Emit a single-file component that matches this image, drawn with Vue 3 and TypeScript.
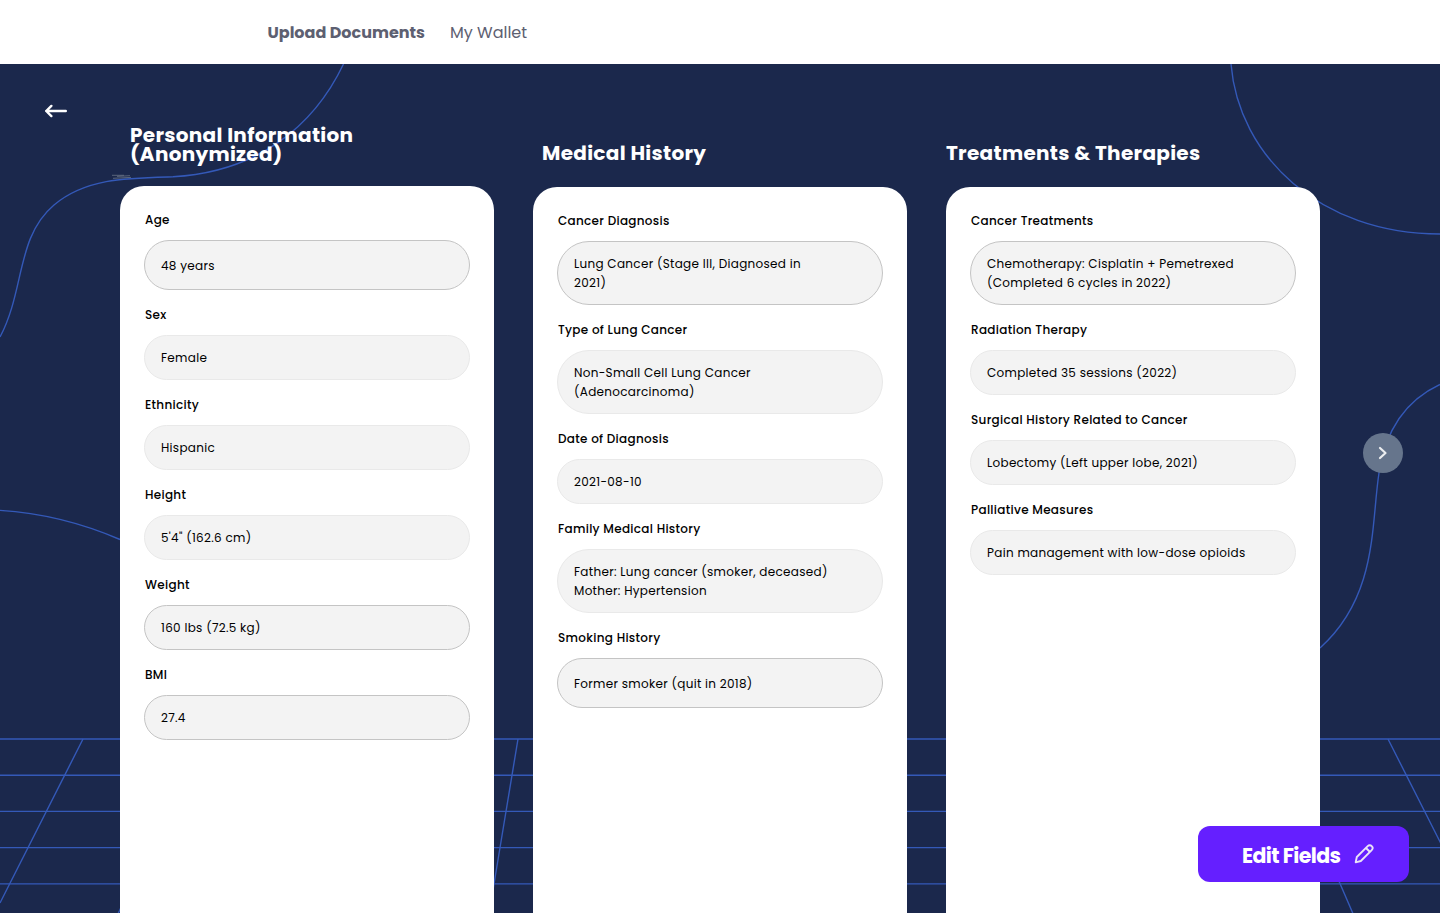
<script setup lang="ts">
interface Field {
  label: string
  lines: string[]
  tall?: boolean
  outlined?: boolean
}
interface Section {
  title: string[]
  fields: Field[]
}

const sections: Section[] = [
  {
    title: ['Personal Information', '(Anonymized)'],
    fields: [
      { label: 'Age', lines: ['48 years'], tall: true, outlined: true },
      { label: 'Sex', lines: ['Female'] },
      { label: 'Ethnicity', lines: ['Hispanic'] },
      { label: 'Height', lines: ['5\'4" (162.6 cm)'] },
      { label: 'Weight', lines: ['160 lbs (72.5 kg)'], outlined: true },
      { label: 'BMI', lines: ['27.4'], outlined: true },
    ],
  },
  {
    title: ['Medical History'],
    fields: [
      { label: 'Cancer Diagnosis', lines: ['Lung Cancer (Stage III, Diagnosed in', '2021)'], outlined: true },
      { label: 'Type of Lung Cancer', lines: ['Non-Small Cell Lung Cancer', '(Adenocarcinoma)'] },
      { label: 'Date of Diagnosis', lines: ['2021-08-10'] },
      { label: 'Family Medical History', lines: ['Father: Lung cancer (smoker, deceased)', 'Mother: Hypertension'] },
      { label: 'Smoking History', lines: ['Former smoker (quit in 2018)'], tall: true, outlined: true },
    ],
  },
  {
    title: ['Treatments & Therapies'],
    fields: [
      { label: 'Cancer Treatments', lines: ['Chemotherapy: Cisplatin + Pemetrexed', '(Completed 6 cycles in 2022)'], outlined: true },
      { label: 'Radiation Therapy', lines: ['Completed 35 sessions (2022)'] },
      { label: 'Surgical History Related to Cancer', lines: ['Lobectomy (Left upper lobe, 2021)'] },
      { label: 'Palliative Measures', lines: ['Pain management with low-dose opioids'] },
    ],
  },
]

const gridRows = [675, 711.2, 747.4, 783.6, 819.9]
</script>

<template>
  <div class="page">
    <header class="topbar">
      <nav class="nav">
        <a class="nav-link active">Upload Documents</a>
        <a class="nav-link">My Wallet</a>
      </nav>
    </header>

    <main class="stage">
      <svg class="backdrop" viewBox="0 0 1440 849" aria-hidden="true">
        <g fill="none" stroke="#3459b8" stroke-width="1.4">
          <path d="M343.5 0C314 62 258 108 173 112.8C128 114 86 114 54 141C16 173 25 226 0 273" />
          <path d="M1231 0C1238.5 92 1320 170 1440 170" />
          <path d="M1440 320.5C1398 340 1384 376 1379 409C1371 460 1378 532 1320 584" />
          <path d="M0 446.4C42 449 84 460 120 475.5" />
          <path v-for="y in gridRows" :key="y" :d="`M0 ${y}H1440`" />
          <path d="M83 675L0 839M158 765L117 852M518 675L493 826M1388 675L1476 849M1310 750L1354 852" />
        </g>
        <g fill="none" stroke="#76808f" stroke-width="0.7">
          <path d="M112 111.3H124M117 112.4L130 111.7M113 114.3L131 113.4" />
        </g>
      </svg>

      <button class="back" aria-label="Back">
        <svg width="24" height="14" viewBox="0 0 24 14" fill="none" stroke="#fff" stroke-width="2.4" stroke-linecap="round" stroke-linejoin="round">
          <path d="M21.8 7H2.2M7.4 1.9L2.2 7L7.4 12.1" />
        </svg>
      </button>

      <div class="columns">
        <section v-for="section in sections" :key="section.title[0]" class="column">
          <h2 class="title">{{ section.title.join('\n') }}</h2>
          <div class="card">
            <div v-for="field in section.fields" :key="field.label" class="field">
              <div class="label">{{ field.label }}</div>
              <div class="value" :class="{ tall: field.tall, outlined: field.outlined, double: field.lines.length > 1 }">
                <span v-for="line in field.lines" :key="line">{{ line }}</span>
              </div>
            </div>
          </div>
        </section>
      </div>

      <button class="next" aria-label="Next">
        <svg width="10" height="14" viewBox="0 0 10 14" fill="none" stroke="#eceef0" stroke-width="2.2" stroke-linecap="round" stroke-linejoin="round">
          <path d="M2 2L7.5 7L2 12" />
        </svg>
      </button>

      <button class="edit">
        <span>Edit Fields</span>
        <svg width="20" height="20" viewBox="0 0 20 20" fill="none" stroke="#e9e2f8" stroke-width="1.9" stroke-linejoin="round">
          <path d="M1.7 18.3L2.8 13L13.7 2.1A2.7 2.7 0 0 1 17.7 6.1L6.8 17Z" />
          <path d="M12 4L16 8" />
        </svg>
      </button>
    </main>
  </div>
</template>

<style>
body {
  margin: 0;
  overflow: hidden;
}
</style>

<style scoped>
.page {
  width: 1440px;
  height: 913px;
  display: flex;
  flex-direction: column;
  overflow: hidden;
  font-family: Poppins, Inter, "Liberation Sans", sans-serif;
}
.topbar {
  box-sizing: border-box;
  height: 64px;
  flex: none;
  background: #fff;
  display: flex;
  align-items: center;
  padding: 2px 0 0 267.5px;
}
.nav {
  display: flex;
  gap: 25px;
}
.nav-link {
  font-size: 16px;
  line-height: 24px;
  color: #5d6071;
}
.nav-link.active {
  font-weight: 700;
}
.stage {
  position: relative;
  flex: 1;
  background: #1b284c;
  overflow: hidden;
}
.backdrop {
  position: absolute;
  inset: 0;
  width: 1440px;
  height: 849px;
}
button {
  border: 0;
  padding: 0;
  font-family: inherit;
}
.back {
  position: absolute;
  left: 44px;
  top: 40px;
  height: 14px;
  background: none;
  display: flex;
}
.columns {
  position: relative;
  display: grid;
  grid-template-columns: repeat(3, 374px);
  gap: 39px;
  padding-left: 120px;
  height: 849px;
}
.column {
  display: flex;
  flex-direction: column;
}
.title {
  box-sizing: border-box;
  height: 123px;
  margin: 0;
  padding: 0 0 24px 9px;
  display: flex;
  flex-direction: column;
  justify-content: flex-end;
  color: #fff;
  font-size: 20px;
  line-height: 19px;
  font-weight: 700;
  letter-spacing: 0.3px;
  white-space: pre;
}
.column:first-child .title {
  height: 122px;
  padding-left: 10px;
  padding-bottom: 22px;
}
.column:last-child .title {
  padding-left: 0;
}
.card {
  flex: 1;
  background: #fff;
  border-radius: 24px 24px 0 0;
  padding: 9px 24px 0;
}
.label {
  height: 45px;
  line-height: 49px;
  padding-left: 1px;
  font-size: 12px;
  font-weight: 500;
  letter-spacing: 0.3px;
  color: #000;
}
.value {
  box-sizing: border-box;
  height: 45px;
  border: 1px solid #e9e9e9;
  border-radius: 32px;
  background: #f3f3f3;
  padding: 0 16px;
  display: flex;
  flex-direction: column;
  justify-content: center;
  font-size: 12px;
  line-height: 19px;
  letter-spacing: 0.3px;
  color: #000;
  white-space: nowrap;
}
.value.tall {
  height: 50px;
}
.value.double {
  height: 64px;
}
.value.outlined {
  border-color: #c4c4c4;
}
.next {
  position: absolute;
  left: 1363px;
  top: 369px;
  width: 40px;
  height: 40px;
  border-radius: 50%;
  background: #66758c;
  display: flex;
  align-items: center;
  justify-content: center;
}
.edit {
  position: absolute;
  left: 1198px;
  top: 762px;
  width: 211px;
  height: 56px;
  box-sizing: border-box;
  padding-left: 44px;
  border-radius: 12px;
  background: #651fff;
  display: flex;
  align-items: center;
  gap: 13.5px;
  color: #fff;
  font-size: 20.5px;
  font-weight: 700;
  letter-spacing: -0.6px;
  white-space: nowrap;
}
.edit span {
  padding-top: 2px;
}
</style>
